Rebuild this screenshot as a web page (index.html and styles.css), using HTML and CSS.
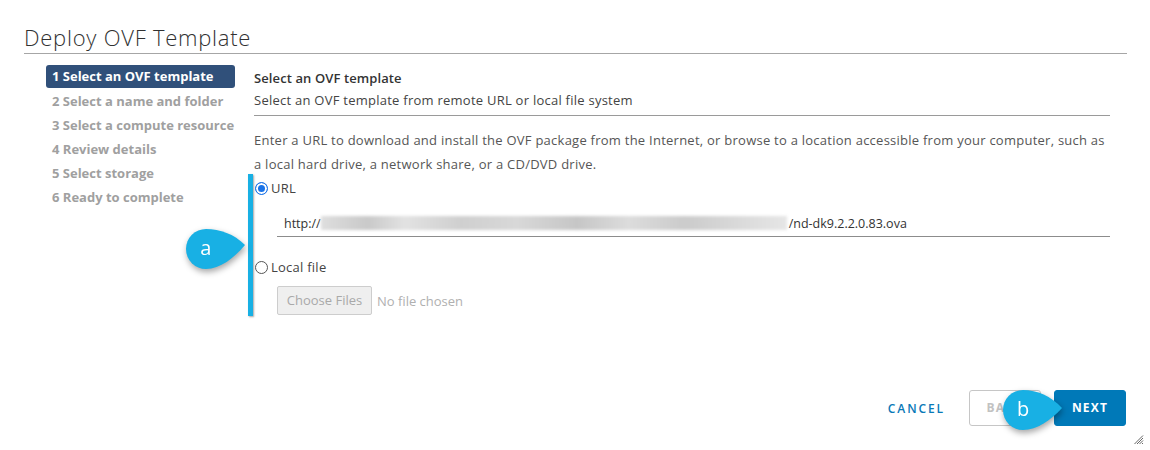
FILE: index.html
```html
<!DOCTYPE html>
<html lang="en">
<head>
<meta charset="utf-8">
<title>Deploy OVF Template</title>
<link rel="stylesheet" href="styles.css">
</head>
<body>
<div class="modal">
  <header class="modal-header">
    <h1 class="modal-title">Deploy OVF Template</h1>
  </header>
  <div class="modal-body">
    <nav class="steps">
      <div class="step active">1 Select an OVF template</div>
      <div class="step">2 Select a name and folder</div>
      <div class="step">3 Select a compute resource</div>
      <div class="step">4 Review details</div>
      <div class="step">5 Select storage</div>
      <div class="step">6 Ready to complete</div>
    </nav>
    <section class="content">
      <div class="content-head">
        <div class="content-title">Select an OVF template</div>
        <div class="content-sub">Select an OVF template from remote URL or local file system</div>
      </div>
      <p class="intro">Enter a URL to download and install the OVF package from the Internet, or browse to a location accessible from your computer, such as a local hard drive, a network share, or a CD/DVD drive.</p>
      <div class="options">
        <label class="radio-row">
          <span class="radio checked"></span>
          <span class="radio-label">URL</span>
        </label>
        <div class="url-input">
          <span class="url-text">http://</span><span class="blurred"></span><span class="url-text">/nd-dk9.2.2.0.83.ova</span>
        </div>
        <label class="radio-row local">
          <span class="radio"></span>
          <span class="radio-label">Local file</span>
        </label>
        <div class="file-row">
          <span class="file-btn">Choose Files</span>
          <span class="file-none">No file chosen</span>
        </div>
        <span class="marker-bar"></span>
        <span class="callout callout-a">
          <svg viewBox="0 0 62 42" width="62" height="42"><path d="M61 17 C50 6 36 1 22 1 A20 20 0 1 0 22 41 C36 41 50 30 61 17 Z" fill="#18b0e4"/></svg>
          <span class="callout-letter">a</span>
        </span>
      </div>
    </section>
  </div>
  <footer class="modal-footer">
    <span class="btn-link">CANCEL</span>
    <span class="btn btn-outline">BACK</span>
    <span class="btn btn-primary">NEXT</span>
    <span class="callout callout-b">
      <svg viewBox="0 0 62 42" width="62" height="42"><path d="M61 19 C50 7 36 1 22 1 A20 20 0 1 0 22 41 C36 41 50 31 61 19 Z" fill="#18b0e4"/></svg>
      <span class="callout-letter">b</span>
    </span>
    <svg class="grip" viewBox="0 0 10 10" width="10" height="10"><path d="M9 3 L3 9 M9 5.5 L5.5 9 M9 8 L8 9 M9 0.5 L0.5 9" stroke="#555" stroke-width="0.9"/></svg>
  </footer>
</div>
</body>
</html>
```
FILE: styles.css
```css
* { box-sizing: border-box; }
html, body { margin: 0; padding: 0; background: #fff; }
body {
  font-family: "Open Sans", "Liberation Sans", sans-serif;
  color: #565656;
  width: 1150px;
  height: 450px;
  overflow: hidden;
}
.modal {
  position: relative;
  width: 1150px;
  height: 450px;
  display: flex;
  flex-direction: column;
  padding: 0 23px 24px 24px;
}
.modal-header {
  padding-top: 23px;
  padding-bottom: 2px;
  border-bottom: 1px solid #a6a6a6;
}
.modal-title {
  margin: 0;
  font-weight: 300;
  font-size: 22px;
  line-height: 28px;
  color: #313131;
  letter-spacing: 0.75px;
}
.modal-body {
  flex: 1;
  display: flex;
  padding-top: 11px;
}
.steps {
  margin-left: 22px;
  width: 189px;
  display: flex;
  flex-direction: column;
}
.step {
  height: 24px;
  line-height: 24px;
  padding-left: 6px;
  font-size: 13px;
  font-weight: 700;
  color: #a0a0a0;
  white-space: nowrap;
}
.step.active {
  background: #30507a;
  color: #fff;
  border-radius: 3px;
  height: 23px;
  line-height: 23px;
  margin-bottom: 1px;
}
.content {
  flex: 1;
  margin-left: 19px;
  margin-right: 17px;
  padding-top: 2px;
  letter-spacing: 0.25px;
}
.content-head {
  border-bottom: 1px solid #9a9a9a;
  padding-bottom: 4px;
}
.content-title {
  font-size: 13px;
  line-height: 22px;
  font-weight: 600;
  color: #333;
  letter-spacing: 0.1px;
}
.content-sub {
  font-size: 13px;
  line-height: 22px;
  color: #444;
}
.intro {
  margin: 12px 0 0;
  font-size: 13px;
  line-height: 24px;
  color: #565656;
}
.options {
  position: relative;
}
.radio-row {
  display: flex;
  align-items: center;
  height: 24px;
  font-size: 13px;
  color: #444;
}
.radio {
  width: 13px;
  height: 13px;
  border-radius: 50%;
  border: 1px solid #555;
  background: #fff;
  margin-left: 1px;
  margin-right: 3px;
}
.radio.checked {
  border: 1px solid #1a73e8;
  background: #1a73e8;
  box-shadow: inset 0 0 0 2px #fff;
}
.url-input {
  margin: 10px 0 0 23px;
  height: 27px;
  border-bottom: 1px solid #8c8c8c;
  display: flex;
  align-items: center;
  padding-left: 7px;
  font-size: 12.5px;
  color: #333;
  letter-spacing: 0;
}
.blurred {
  width: 466px;
  height: 14px;
  margin: 0 2px 0 0;
  background: linear-gradient(90deg, #dedede 0%, #c9c9c9 10%, #e2e2e2 18%, #cfcfcf 30%, #d8d8d8 42%, #c6c6c6 55%, #dcdcdc 66%, #cbcbcb 78%, #dadada 90%, #e6e6e6 100%);
  filter: blur(1.5px);
}
.radio-row.local {
  margin-top: 18px;
}
.file-row {
  margin: 7px 0 0 23px;
  display: flex;
  align-items: center;
  gap: 5px;
  font-size: 13px;
  letter-spacing: 0;
}
.file-btn {
  width: 95px;
  height: 29px;
  line-height: 27px;
  text-align: center;
  background: #efefef;
  border: 1px solid #cdcdcd;
  border-radius: 2px;
  color: #a9a9a9;
}
.file-none {
  color: #b0b0b0;
}
.marker-bar {
  position: absolute;
  left: -6px;
  top: -2px;
  width: 5px;
  height: 142px;
  background: #18b0e4;
  box-shadow: 1px 1px 2px rgba(0, 0, 0, 0.35);
}
.callout {
  position: absolute;
  width: 62px;
  height: 42px;
  filter: drop-shadow(1px 3px 3px rgba(0, 0, 0, 0.35));
}
.callout svg { display: block; }
.callout-letter {
  position: absolute;
  left: 0;
  top: 0;
  width: 44px;
  height: 42px;
  line-height: 40px;
  text-align: center;
  color: #fff;
  font-size: 20px;
  font-family: "Open Sans", "Liberation Sans", sans-serif;
}
.callout-a {
  left: -70px;
  top: 52px;
}
.modal-footer {
  position: relative;
  display: flex;
  justify-content: flex-end;
  align-items: center;
  gap: 13px;
  padding-right: 1px;
}
.btn-link {
  font-size: 12px;
  font-weight: 600;
  letter-spacing: 1.9px;
  color: #0a79b7;
  margin-right: 11px;
}
.btn {
  height: 36px;
  line-height: 34px;
  border-radius: 3px;
  font-size: 12px;
  font-weight: 700;
  letter-spacing: 1.2px;
  text-align: center;
}
.btn-outline {
  width: 72px;
  border: 1px solid #c6c6c6;
  color: #c2c2c2;
  background: #fff;
}
.btn-primary {
  width: 72px;
  border: 1px solid #0079b8;
  background: #0079b8;
  color: #fff;
}
.callout-b {
  right: 64px;
  top: -1px;
}
.grip {
  position: absolute;
  right: -17px;
  bottom: -19px;
}
```
